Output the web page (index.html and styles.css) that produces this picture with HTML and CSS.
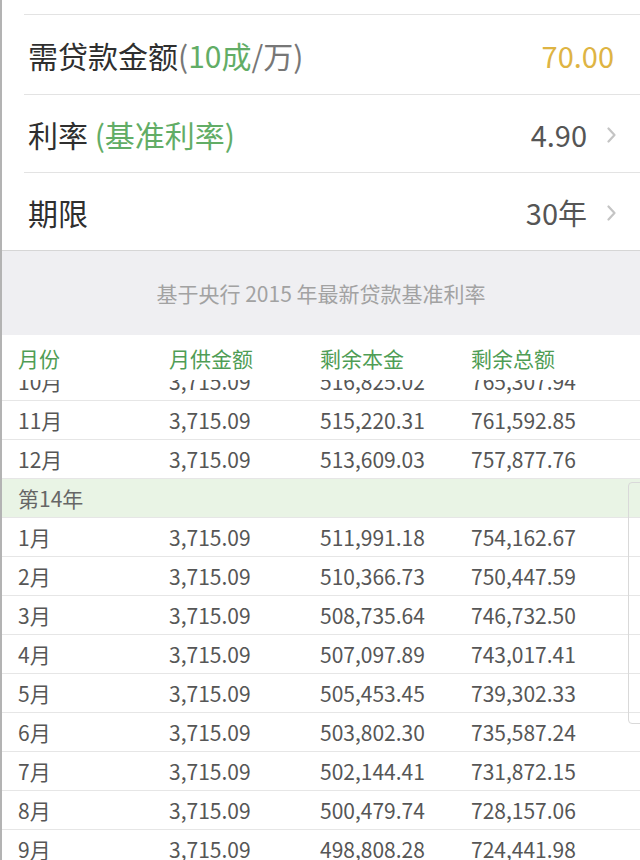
FILE: index.html
```html
<!DOCTYPE html>
<html lang="zh-CN">
<head>
<meta charset="utf-8">
<title>房贷计算</title>
<link rel="stylesheet" href="styles.css">
</head>
<body>
<div class="page">
  <div class="form">
    <div class="form-row row-amount">
      <div class="label">需贷款金额<span class="paren">(</span><span class="green">10成</span><span class="paren">/万)</span></div>
      <div class="value gold">70.00</div>
    </div>
    <div class="form-row">
      <div class="label">利率 <span class="green">(基准利率)</span></div>
      <div class="value-wrap"><span class="value">4.90</span><svg class="chev" width="9" height="16" viewBox="0 0 9 16"><polyline points="1.5,1.5 7.5,8 1.5,14.5" fill="none" stroke="#c4c4c4" stroke-width="2.2" stroke-linecap="round" stroke-linejoin="round"/></svg></div>
    </div>
    <div class="form-row">
      <div class="label">期限</div>
      <div class="value-wrap"><span class="value">30年</span><svg class="chev" width="9" height="16" viewBox="0 0 9 16"><polyline points="1.5,1.5 7.5,8 1.5,14.5" fill="none" stroke="#c4c4c4" stroke-width="2.2" stroke-linecap="round" stroke-linejoin="round"/></svg></div>
    </div>
  </div>

  <div class="note">基于央行 2015 年最新贷款基准利率</div>

  <div class="table">
    <div class="thead">
      <span>月份</span><span>月供金额</span><span>剩余本金</span><span>剩余总额</span>
    </div>
    <div class="tbody">
      <div class="rows">
        <div class="tr"><span>10月</span><span>3,715.09</span><span>516,825.02</span><span>765,307.94</span></div>
        <div class="tr"><span>11月</span><span>3,715.09</span><span>515,220.31</span><span>761,592.85</span></div>
        <div class="tr"><span>12月</span><span>3,715.09</span><span>513,609.03</span><span>757,877.76</span></div>
        <div class="tr year"><span>第14年</span></div>
        <div class="tr"><span>1月</span><span>3,715.09</span><span>511,991.18</span><span>754,162.67</span></div>
        <div class="tr"><span>2月</span><span>3,715.09</span><span>510,366.73</span><span>750,447.59</span></div>
        <div class="tr"><span>3月</span><span>3,715.09</span><span>508,735.64</span><span>746,732.50</span></div>
        <div class="tr"><span>4月</span><span>3,715.09</span><span>507,097.89</span><span>743,017.41</span></div>
        <div class="tr"><span>5月</span><span>3,715.09</span><span>505,453.45</span><span>739,302.33</span></div>
        <div class="tr"><span>6月</span><span>3,715.09</span><span>503,802.30</span><span>735,587.24</span></div>
        <div class="tr"><span>7月</span><span>3,715.09</span><span>502,144.41</span><span>731,872.15</span></div>
        <div class="tr"><span>8月</span><span>3,715.09</span><span>500,479.74</span><span>728,157.06</span></div>
        <div class="tr"><span>9月</span><span>3,715.09</span><span>498,808.28</span><span>724,441.98</span></div>
      </div>
    </div>
  </div>

  <div class="edge"></div>
</div>
</body>
</html>
```

FILE: styles.css
```css
* { box-sizing: border-box; }
html, body {
  margin: 0;
  padding: 0;
  background: #ffffff;
}
body {
  font-family: "Noto Sans CJK SC", "Noto Sans", sans-serif;
  color: #333;
}
.page {
  position: relative;
  width: 640px;
  height: 860px;
  overflow: hidden;
  border-left: 2px solid #b3b3b3;
  background: #fff;
}
.form {
  padding-top: 14px;
}
.form-row {
  margin-left: 22px;
  height: 78px;
  border-top: 1px solid #e3e3e3;
  display: flex;
  align-items: center;
  justify-content: space-between;
  padding-left: 4px;
  padding-right: 24px;
  font-size: 29px;
}
.form-row.row-amount {
  height: 80px;
  padding-right: 26px;
}
.label {
  color: #2f2f2f;
  font-size: 30px;
}
.paren { color: #777; }
.green { color: #62ad66; }
.value { color: #555; }
.value.gold { color: #deb443; }
.value-wrap {
  display: flex;
  align-items: center;
  gap: 20px;
}
.chev {
  display: block;
  margin-top: 2px;
}
.note {
  height: 85px;
  background: #efeff2;
  border-top: 1px solid #d6d6d6;
  display: flex;
  align-items: center;
  justify-content: center;
  font-size: 21px;
  color: #a2a2a2;
}
.thead, .tr {
  display: grid;
  grid-template-columns: 151px 151px 151px 1fr;
  padding-left: 16px;
  align-items: center;
}
.thead {
  position: relative;
  z-index: 1;
  height: 45px;
  background: #fff;
  color: #4f9d55;
  font-size: 21px;
}
.tbody {
  height: 480px;
  overflow: hidden;
}
.rows {
  margin-top: -18px;
}
.tr {
  height: 39px;
  border-bottom: 1px solid #e6e6e6;
  font-size: 21px;
  color: #565656;
}
.tr.year {
  background: #e9f4e5;
  color: #666;
}
.edge {
  position: absolute;
  left: 626px;
  top: 482px;
  width: 30px;
  height: 242px;
  border: 1px solid #d9d9d9;
  border-radius: 4px;
}
```
